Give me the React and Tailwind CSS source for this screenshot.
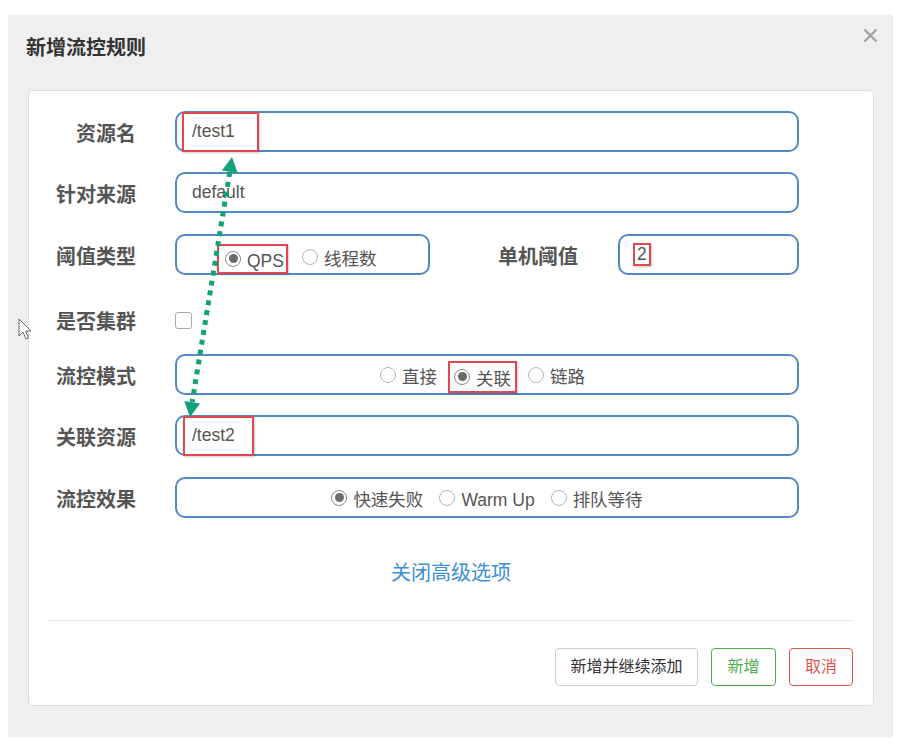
import React from 'react'

const CN = { fontFamily: '"Liberation Sans", "Noto Sans CJK SC", sans-serif' }

const Radio = ({ checked, label }) => (
  <span className="flex items-center">
    <span
      className={`flex items-center justify-center w-[16px] h-[16px] rounded-full border bg-white ${
        checked ? 'border-[#8a8a8a]' : 'border-[#b5b5b5]'
      }`}
    >
      {checked && <span className="w-[9px] h-[9px] rounded-full bg-[#6b6b6b]" />}
    </span>
    <span className="ml-[6px] mt-[6px] text-[17.5px] text-[#555] leading-none">{label}</span>
  </span>
)

const Label = ({ children, className = 'w-[107px]' }) => (
  <div className={`${className} shrink-0 pt-[4px] text-right text-[20px] font-bold text-[#555]`}>{children}</div>
)

const boxCls = 'relative flex items-center h-[41px] border-2 border-[#5289c4] rounded-[10px] bg-white'

export default function App() {
  return (
    <div className="relative w-[902px] h-[748px] bg-white overflow-hidden" style={CN}>
      <div className="ml-[8px] mt-[15px] w-[885px] h-[722px] bg-[#efefef] pl-[20px] pr-[19px]">
        {/* 标题 */}
        <div className="relative h-[75px] pt-[19px]">
          <div className="-ml-[2px] text-[20px] leading-[28px] font-bold text-[#333]">新增流控规则</div>
          <svg className="absolute -right-[4px] top-[13px]" width="15" height="15" viewBox="0 0 15 15">
            <path d="M1.5 1.5 L13.5 13.5 M13.5 1.5 L1.5 13.5" stroke="#a3a3a3" strokeWidth="2.4" />
          </svg>
        </div>

        {/* 表单卡片 */}
        <div className="w-[846px] h-[616px] bg-white border border-[#dcdcdc] rounded-[5px] flex flex-col">
          {/* 资源名 */}
          <div className="flex items-center mt-[20px] h-[41px]">
            <Label>资源名</Label>
            <div className={`${boxCls} ml-[39px] w-[624px] pl-[5px]`}>
              <div className="flex items-center h-[40px] border-2 border-[#e0474f] pl-[8px] w-[77px] shadow-[1px_1px_2px_rgba(0,0,0,0.2)] text-[17.5px] text-[#555]">
                /test1
              </div>
            </div>
          </div>

          {/* 针对来源 */}
          <div className="flex items-center mt-[20px] h-[41px]">
            <Label>针对来源</Label>
            <div className={`${boxCls} ml-[39px] w-[624px] pl-[15px] text-[17.5px] text-[#555]`}>default</div>
          </div>

          {/* 阈值类型 / 单机阈值 */}
          <div className="flex items-center mt-[21px] h-[41px]">
            <Label>阈值类型</Label>
            <div className={`${boxCls} ml-[39px] w-[255px] pl-[40px]`}>
              <div className="flex items-center h-[30px] mt-[8px] border-2 border-[#e0474f] pl-[6px] pr-[2px] shadow-[1px_1px_2px_rgba(0,0,0,0.2)]">
                <Radio checked label="QPS" />
              </div>
              <div className="ml-[14px] mt-[4px]">
                <Radio label="线程数" />
              </div>
            </div>
            <Label className="w-[148px]">单机阈值</Label>
            <div className={`${boxCls} ml-[40px] w-[181px] pl-[13px]`}>
              <div className="flex items-center h-[23px] border-2 border-[#e0474f] px-[2px] shadow-[1px_1px_2px_rgba(0,0,0,0.2)] text-[17.5px] text-[#555]">
                2
              </div>
            </div>
          </div>

          {/* 是否集群 */}
          <div className="flex items-center mt-[26px] h-[38px]">
            <Label>是否集群</Label>
            <div className="ml-[39px] w-[17px] h-[17px] rounded-[3px] border border-[#aaa] bg-white" />
          </div>

          {/* 流控模式 */}
          <div className="flex items-center mt-[15px] h-[41px]">
            <Label>流控模式</Label>
            <div className={`${boxCls} ml-[39px] w-[624px] justify-center pr-[9px]`}>
              <Radio label="直接" />
              <div className="ml-[11px] flex items-center h-[32px] mt-[4px] border-2 border-[#e0474f] pl-[4px] pr-[4px] shadow-[1px_1px_2px_rgba(0,0,0,0.2)]">
                <Radio checked label="关联" />
              </div>
              <div className="ml-[11px]">
                <Radio label="链路" />
              </div>
            </div>
          </div>

          {/* 关联资源 */}
          <div className="flex items-center mt-[20px] h-[41px]">
            <Label>关联资源</Label>
            <div className={`${boxCls} ml-[39px] w-[624px] pl-[6px]`}>
              <div className="flex items-center h-[40px] border-2 border-[#e0474f] pl-[7px] w-[71px] shadow-[1px_1px_2px_rgba(0,0,0,0.2)] text-[17.5px] text-[#555]">
                /test2
              </div>
            </div>
          </div>

          {/* 流控效果 */}
          <div className="flex items-center mt-[21px] h-[41px]">
            <Label>流控效果</Label>
            <div className={`${boxCls} ml-[39px] w-[624px] justify-center gap-[16px]`}>
              <Radio checked label="快速失败" />
              <Radio label="Warm Up" />
              <Radio label="排队等待" />
            </div>
          </div>

          <div className="mt-[41px] text-center text-[20px] leading-[28px] text-[#3d8fd4]">关闭高级选项</div>

          <div className="mt-[33px] mx-[20px] border-t border-[#e6e6e6]" />

          {/* 按钮 */}
          <div className="mt-[27px] flex justify-end pr-[20px] gap-[13px]">
            <button className="h-[38px] w-[143px] border border-[#ccc] rounded-[4px] bg-white text-[16px] text-[#333]">
              新增并继续添加
            </button>
            <button className="h-[38px] w-[65px] border border-[#4cae4c] rounded-[4px] bg-white text-[16px] text-[#4cae4c]">
              新增
            </button>
            <button className="h-[38px] w-[64px] border border-[#d9534f] rounded-[4px] bg-white text-[16px] text-[#d9534f]">
              取消
            </button>
          </div>
        </div>
      </div>

      {/* 绿色双向箭头 */}
      <svg className="absolute left-0 top-0 pointer-events-none" width="902" height="748">
        <line x1="229.8" y1="172" x2="192.2" y2="402" stroke="#13a17b" strokeWidth="5" strokeDasharray="5 5" />
        <polygon points="232,157 237.7,173 221.9,170.6" fill="#13a17b" />
        <polygon points="190,417 200.1,403.4 184.3,401" fill="#13a17b" />
      </svg>

      {/* 鼠标指针 */}
      <svg className="absolute left-[18px] top-[318px] pointer-events-none" width="16" height="24" viewBox="0 0 16 24">
        <path d="M1 1 L1 18 L5 14 L8 21 L10.5 20 L7.5 13 L13 13 Z" fill="white" stroke="#666" strokeWidth="1" />
      </svg>
    </div>
  )
}
